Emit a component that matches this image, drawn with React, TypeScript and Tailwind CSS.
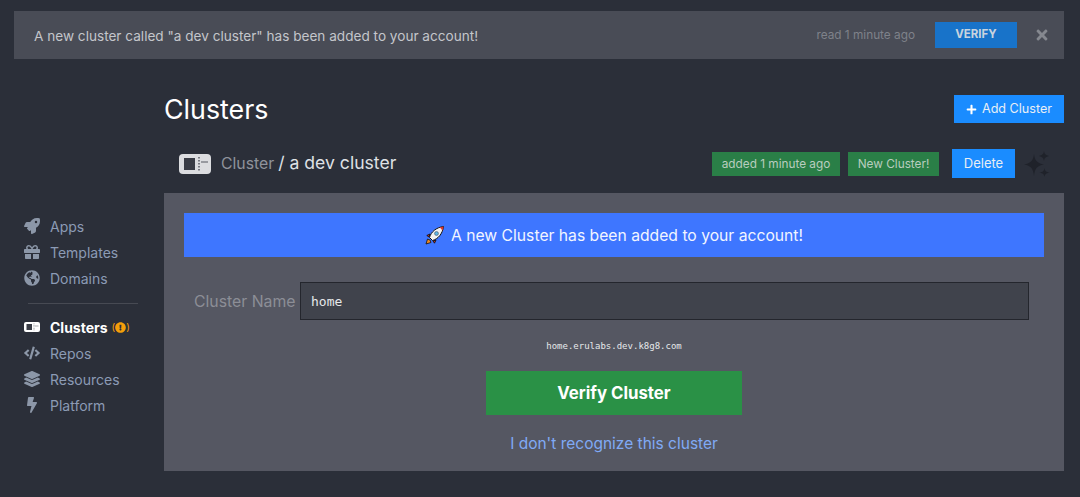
import React from 'react';
import { FaRocket, FaGift, FaGlobeAmericas, FaCode, FaLayerGroup, FaBolt, FaPlus, FaTimes, FaExclamationCircle } from 'react-icons/fa';

const ClusterIcon = ({ className }: { className: string }) => (
  <svg viewBox="0 0 32 20" className={className}>
    <rect x="0" y="0" width="32" height="20" rx="4" fill="currentColor" />
    <rect x="5" y="4" width="11" height="12" fill="#3a3d46" />
    <path d="M20 3v14" stroke="#3a3d46" strokeWidth="1.2" strokeDasharray="1.5 1.5" />
    <path d="M22 8h7" stroke="#6b6e76" strokeWidth="1.2" />
  </svg>
);

const Sparkles = () => (
  <svg viewBox="0 0 26 26" className="ml-[9px] h-[26px] w-[26px] text-[#1f222a]" fill="currentColor">
    <path d="M10 3 C11 10 13 12 20 13.5 C13 15 11 17 10 25 C9 17 7 15 0 13.5 C7 12 9 10 10 3Z" />
    <path d="M20 0 C20.5 3 21.5 4 25 5 C21.5 6 20.5 7 20 10 C19.5 7 18.5 6 15 5 C18.5 4 19.5 3 20 0Z" />
    <path d="M20.5 17 C21 20 22 21 25.5 21.5 C22 22.5 21 23 20.5 26 C20 23 19 22.5 15.5 21.5 C19 21 20 20 20.5 17Z" />
  </svg>
);

const RocketEmoji = () => (
  <svg viewBox="0 0 20 20" className="mr-[6px] h-[20px] w-[20px]">
    <path d="M2.5 14 L1 19 L6 17.5 L5 15Z" fill="#f08a24" stroke="#111" strokeWidth="0.8" />
    <path d="M5 9 L1.8 10.5 L4 12Z" fill="#d9342b" stroke="#111" strokeWidth="0.9" />
    <path d="M11 15 L9.5 18.2 L8 16Z" fill="#d9342b" stroke="#111" strokeWidth="0.9" />
    <path d="M4.5 12.5 C6 7 11 2.5 18.5 1.5 C17.5 9 13 14 7.5 15.5Z" fill="#f2f2f2" stroke="#111" strokeWidth="1" />
    <path d="M14.2 2.6 C15.6 3.2 16.8 4.4 17.4 5.8 C18 4.4 18.4 3 18.5 1.5 C17 1.7 15.6 2.1 14.2 2.6Z" fill="#d9342b" />
    <circle cx="11.5" cy="8.5" r="1.9" fill="#5cb8e8" stroke="#5a6a78" strokeWidth="0.8" />
  </svg>
);

const topLinks = [
  { label: 'Apps', icon: <FaRocket size={16} /> },
  { label: 'Templates', icon: <FaGift size={16} /> },
  { label: 'Domains', icon: <FaGlobeAmericas size={16} /> },
];

const bottomLinks = [
  { label: 'Repos', icon: <FaCode size={16} /> },
  { label: 'Resources', icon: <FaLayerGroup size={16} /> },
  { label: 'Platform', icon: <FaBolt size={16} /> },
];

const NavLink = ({ label, icon }: { label: string; icon: React.ReactNode }) => (
  <div className="flex h-[26px] items-center text-[14px] text-[#8c9bb5]">
    <span className="mr-[10px] flex w-[16px] justify-center text-[#8c97a8]">{icon}</span>
    {label}
  </div>
);

export default function App() {
  return (
    <div className="h-[497px] w-[1080px] overflow-hidden bg-[#2b2f39] pl-[14px] pr-[16px] pt-[11px] font-['Inter',sans-serif]">
      {/* Notification */}
      <div className="flex h-[48px] items-center bg-[#494c56] pl-[20px] pr-[14px]">
        <span className="flex-1 pt-[2px] text-[13.6px] text-[#c4c6cb]">A new cluster called "a dev cluster" has been added to your account!</span>
        <span className="pt-[2px] text-[11.8px] text-[#7f828a]">read 1 minute ago</span>
        <button className="ml-[20px] h-[26px] w-[82px] bg-[#1873c9] text-[11.5px] font-bold text-[#c9d3de]">VERIFY</button>
        <FaTimes size={16} className="ml-[17px] text-[#85888f]" />
      </div>

      <div className="flex">
        {/* Sidebar */}
        <div className="w-[150px] pl-[10px] pt-[154px]">
          {topLinks.map((l) => <NavLink key={l.label} {...l} />)}
          <div className="mb-[10px] ml-[4px] mr-[26px] mt-[12px] border-t border-[#474a53]" />
          <div className="flex h-[26px] items-center text-[14px] font-bold text-white">
            <span className="mr-[10px] flex w-[16px] justify-center"><ClusterIcon className="h-[10px] w-[16px]" /></span>
            Clusters
            <span className="ml-[4px] flex items-center text-[10px] font-normal leading-none text-[#f59f0a]">
              <span>(</span><FaExclamationCircle size={11} /><span>)</span>
            </span>
          </div>
          {bottomLinks.map((l) => <NavLink key={l.label} {...l} />)}
        </div>

        {/* Main */}
        <div className="flex-1">
          <div className="flex items-center justify-between pt-[36px]">
            <h1 className="text-[26.8px] leading-[28px] text-white">Clusters</h1>
            <button className="flex h-[28px] w-[110px] items-center justify-center gap-[5px] bg-[#1a8cff] text-[12.6px] text-[#e8eef5]">
              <FaPlus size={11} className="text-white" /> Add Cluster
            </button>
          </div>

          <div className="mt-[26px] flex h-[29px] items-center pl-[15px] pr-[14px]">
            <ClusterIcon className="h-[20px] w-[32px] text-[#dcdde0]" />
            <span className="ml-[10px] flex flex-1 items-baseline gap-[4px] text-[17.6px] text-[#dfe1e5]">
              <span className="text-[15.8px] text-[#8f939b]">Cluster</span> / a dev cluster
            </span>
            <span className="flex h-[24px] w-[128px] items-center justify-center bg-[#2a7f47] pt-[2px] text-[11.8px] text-[#b9cdbf]">added 1 minute ago</span>
            <span className="ml-[8px] flex h-[24px] w-[91px] items-center justify-center bg-[#2a7f47] pt-[2px] text-[11.8px] text-[#b9cdbf]">New Cluster!</span>
            <button className="ml-[13px] h-[29px] w-[63px] bg-[#1a8cff] text-[13px] text-[#e8eef5]">Delete</button>
            <Sparkles />
          </div>

          <div className="mt-[15px] h-[278px] bg-[#555762] p-[20px]">
            <div className="flex h-[44px] items-center justify-center bg-[#3e76ff] text-[15.7px] text-[#f2f5ff]">
              <RocketEmoji /><span className="pt-[2px]">A new Cluster has been added to your account!</span>
            </div>
            <div className="mt-[25px] flex items-center pl-[10px] pr-[15px]">
              <label className="w-[106px] pt-[2px] text-[15.8px] text-[#8c8e96]">Cluster Name</label>
              <div className="flex h-[38px] flex-1 items-center border border-[#24262d] bg-[#40434c] pl-[10px] pt-[2px] font-['DejaVu_Sans_Mono',monospace] text-[13px] text-[#e6e8ea]">home</div>
            </div>
            <p className="mt-[20px] text-center font-['DejaVu_Sans_Mono',monospace] text-[9px] leading-[12px] text-[#e6e8ea]">home.erulabs.dev.k8g8.com</p>
            <button className="mx-auto mt-[19px] block h-[44px] w-[256px] bg-[#2a9146] pt-[2px] text-[16.8px] font-bold text-white">Verify Cluster</button>
            <p className="mt-[19px] text-center text-[15.5px] leading-[20px] text-[#80aaf5]">I don't recognize this cluster</p>
          </div>
        </div>
      </div>
    </div>
  );
}
